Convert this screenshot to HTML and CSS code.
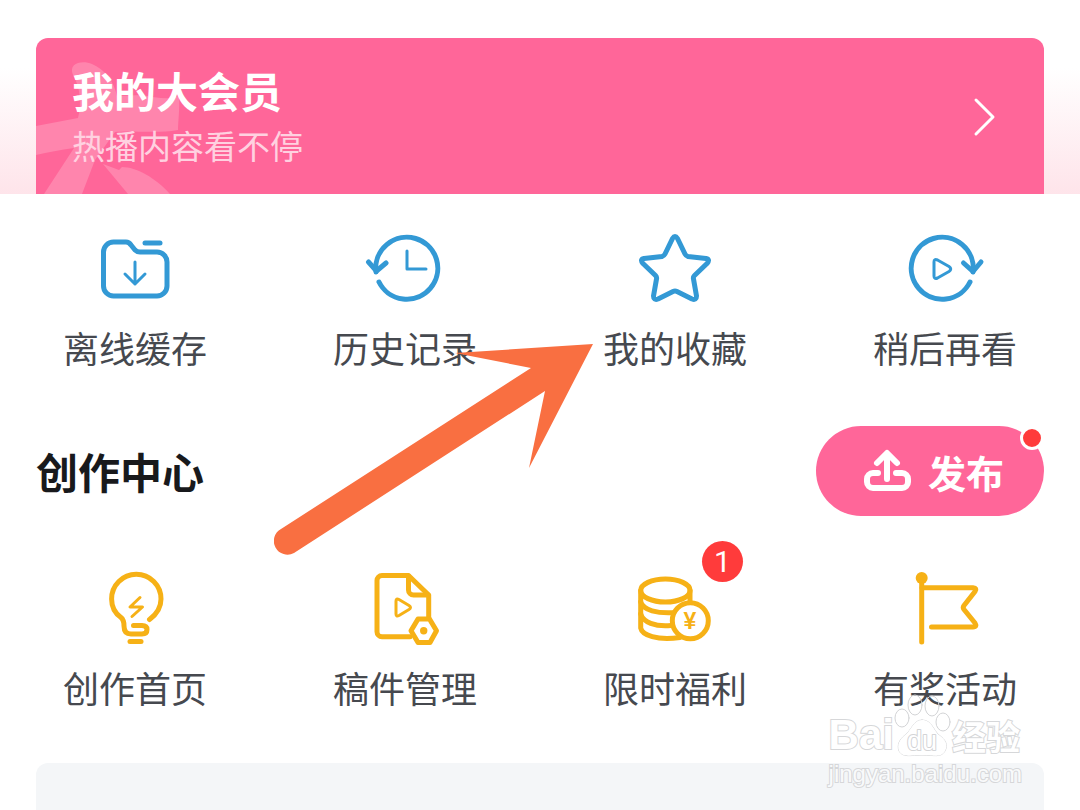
FILE: index.html
```html
<!DOCTYPE html>
<html lang="zh-CN">
<head>
    <meta charset="UTF-8">
    <meta name="viewport" content="width=device-width, initial-scale=1.0">
    <title>我的</title>
    <link rel="stylesheet" href="styles.css">
</head>
<body>
    <div class="page">
        <div class="vip">
            <a class="vip-card" href="#">
                <svg class="vip-bow" viewBox="0 0 180 156" aria-hidden="true">
                    <path d="M37 37C32 25 46 22 56 26C68 31 78 43 81 58L106 57C120 60 135 62 143 58C144 70 142 84 142 92C120 96 95 92 79 94L59 122L46 156H8L38 110C24 112 12 114 0 117V88L42 80C46 66 44 48 37 37Z"/>
                    <path d="M67 126L83 132L86 129C100 129 120 140 134 156H92Z"/>
                </svg>
                <span class="vip-text">
                    <strong class="vip-title">我的大会员</strong>
                    <span class="vip-sub">热播内容看不停</span>
                </span>
                <svg class="vip-more" viewBox="0 0 24 40" aria-hidden="true">
                    <path d="M4 3L21 20L4 37"/>
                </svg>
            </a>
        </div>

        <nav class="grid blue">
            <a class="item" href="#">
                <svg class="icon" viewBox="0 0 80 80" aria-hidden="true">
                    <path d="M8.5 24a10 10 0 0 1 10-10H31q3 0 5 3l4 5q2 2 5 2H62a10 10 0 0 1 10 10V58a10 10 0 0 1-10 10H18.5a10 10 0 0 1-10-10Z"/>
                    <path d="M50 15H65"/>
                    <path class="thin" d="M40 34V56M30 46L40 56L50 46"/>
                </svg>
                <span class="label">离线缓存</span>
            </a>
            <a class="item" href="#">
                <svg class="icon" viewBox="0 0 80 80" aria-hidden="true">
                    <path d="M11 44A31 31 0 1 1 14 54"/>
                    <path d="M3.5 34L11.5 43L21 35"/>
                    <path class="thin" d="M42 23V41H61"/>
                </svg>
                <span class="label">历史记录</span>
            </a>
            <a class="item" href="#">
                <svg class="icon" viewBox="0 0 80 80" aria-hidden="true">
                    <path d="M37.5 10.5Q40 6.500 42.5 10.5L50 26Q51 28 53 28.5L71 30.5Q75.5 31.5 72 35.5L59.5 47.5Q58 49 58.5 51L61.5 68Q61.5 72.5 57 71L42 63.5Q40 62.5 38 63.5L23 71Q18.5 72.5 18.5 68L21.5 51Q22 49 20.5 47.5L8 35.5Q4.5 31.5 9 30.5L27 28.5Q29 28 30 26Z"/>
                </svg>
                <span class="label">我的收藏</span>
            </a>
            <a class="item" href="#">
                <svg class="icon" viewBox="0 0 80 80" aria-hidden="true">
                    <path d="M68 44A31 31 0 1 0 65 54"/>
                    <path d="M58.5 35L68 43.5L76 34"/>
                    <path class="thin" d="M29 34Q29 30.5 32.5 32L44 38.5Q47.5 41 44 43.5L32.5 50Q29 51.5 29 48Z"/>
                </svg>
                <span class="label">稍后再看</span>
            </a>
        </nav>

        <div class="section-head">
            <h2>创作中心</h2>
            <button class="publish" type="button">
                <svg class="upload" viewBox="0 0 48 48" aria-hidden="true">
                    <path d="M24 32V7M14 16L24 6L34 16"/>
                    <path d="M15 26H10a6 6 0 0 0-6 6v3a6 6 0 0 0 6 6h29a6 6 0 0 0 6-6v-3a6 6 0 0 0-6-6h-6"/>
                </svg>
                发布
                <span class="dot"></span>
            </button>
        </div>

        <nav class="grid yellow">
            <a class="item" href="#">
                <svg class="icon" viewBox="0 0 80 80" aria-hidden="true">
                    <path d="M54.5 51.5C62 46 66 39 66 31A24.7 24.7 0 0 0 16.6 31C16.6 40 21 46 26 49.5Q29 52 29 58Q29 66 36 66H47Q52 66 52 61.5Q52 57.5 47 57.5H38.5"/>
                    <path d="M35 73.5H46"/>
                    <path class="thin" d="M45 29.5L35 39H47.5L37 48.5"/>
                </svg>
                <span class="label">创作首页</span>
            </a>
            <a class="item" href="#">
                <svg class="icon" viewBox="0 0 80 80" aria-hidden="true">
                    <path d="M45 68.7H17a5 5 0 0 1-5-5V12.5a5 5 0 0 1 5-5H43.5L63.7 27V50"/>
                    <path d="M43.5 8V22a5 5 0 0 0 5 5H63"/>
                    <path class="thin" d="M31 33Q31 30 34 31.5L44 37.5Q47 39.5 44 41.5L34 47.5Q31 49 31 46Z"/>
                    <path d="M53 51H64.5L71.5 62.8L65 74.5H53L46 62.8Z"/>
                    <circle class="solid" cx="58.7" cy="62.7" r="3.7"/>
                </svg>
                <span class="label">稿件管理</span>
            </a>
            <a class="item" href="#">
                <span class="badge">1</span>
                <svg class="icon" viewBox="0 0 80 80" aria-hidden="true">
                    <ellipse cx="30.4" cy="22.5" rx="24.7" ry="11.5"/>
                    <path d="M5.7 22.5V60C7 67 22 73 45 69.5M55 22.5V34"/>
                    <path d="M5.7 34C8 42 22 46 41 44.5M5.7 46C8 54 20 59 36 57.5"/>
                    <circle cx="55.3" cy="52.7" r="18"/>
                    <text class="yen" x="55" y="61" text-anchor="middle">¥</text>
                </svg>
                <span class="label">限时福利</span>
            </a>
            <a class="item" href="#">
                <svg class="icon" viewBox="0 0 80 80" aria-hidden="true">
                    <path d="M16.7 10V74"/>
                    <path d="M17 19.7H68Q72.5 20 70 23.5L59 37.5Q57.5 39.5 59 41.5L70 55Q72.5 59 68 59H26.5"/>
                    <circle class="solid" cx="16.7" cy="10" r="6"/>
                </svg>
                <span class="label">有奖活动</span>
            </a>
        </nav>

        <div class="panel"></div>

        <svg class="pointer" viewBox="0 0 320 211" aria-hidden="true">
            <path d="M319 0L181 9L257 24L7 185A13 13 0 0 0 20 209L271 47L255 124Z"/>
        </svg>

        <div class="watermark">
            <div class="mark-row">
                <span class="mark-bai">Bai</span>
                <svg class="paw" viewBox="0 0 58 64" aria-hidden="true">
                    <ellipse cx="8" cy="24" rx="7" ry="9"/>
                    <ellipse cx="21" cy="11" rx="7" ry="10"/>
                    <ellipse cx="38" cy="12" rx="7" ry="10"/>
                    <ellipse cx="49" cy="28" rx="7" ry="9"/>
                    <path d="M28 26C38 26 39 36 45 41C52 46 54 51 51 57C47 64 40 61 28 61C17 61 9 64 5 57C3 51 5 46 11 41C18 36 19 26 28 26Z"/>
                    <text x="28" y="56" text-anchor="middle">du</text>
                </svg>
                <span class="mark-cn">经验</span>
            </div>
            <div class="mark-url">jingyan.baidu.com</div>
        </div>
    </div>
</body>
</html>
```
FILE: styles.css
```css
body {
    margin: 0;
    background-color: #fff;
    font-family: "Noto Sans CJK SC", "Noto Sans", sans-serif;
    color: #46494f;
}
a {
    color: inherit;
    text-decoration: none;
}
.page {
    position: relative;
    min-height: 100vh;
    display: flex;
    flex-direction: column;
    overflow: hidden;
}
svg {
    fill: none;
    stroke: currentColor;
    stroke-linecap: round;
    stroke-linejoin: round;
}

/* member card */
.vip {
    padding: 38px 36px 0;
    background: linear-gradient(#fff 35%, #fee4ea);
}
.vip-card {
    position: relative;
    display: flex;
    align-items: center;
    justify-content: space-between;
    padding: 26px 48px 24px 36px;
    border-radius: 12px 12px 0 0;
    background-color: #ff6699;
    color: #fff;
    overflow: hidden;
}
.vip-bow {
    position: absolute;
    left: 0;
    top: 0;
    width: 180px;
    height: 156px;
    fill: #ff85ad;
    stroke: none;
}
.vip-text {
    position: relative;
    display: flex;
    flex-direction: column;
    gap: 4px;
}
.vip-title {
    font-size: 42px;
    line-height: 52px;
}
.vip-sub {
    font-size: 33px;
    line-height: 50px;
    color: #ffd1e0;
}
.vip-more {
    width: 24px;
    height: 40px;
    stroke-width: 3;
}

/* icon grids */
.grid {
    display: grid;
    grid-template-columns: repeat(4, 1fr);
}
.blue {
    padding-top: 34px;
}
.item {
    position: relative;
    display: flex;
    flex-direction: column;
    align-items: center;
    gap: 15px;
}
.icon {
    width: 80px;
    height: 80px;
    stroke-width: 5;
}
.blue .icon {
    color: #3399d5;
}
.yellow .icon {
    color: #f6b116;
}
.thin {
    stroke-width: 3;
}
.solid {
    fill: currentColor;
    stroke: none;
}
.yen {
    font-family: "Liberation Sans", sans-serif;
    font-size: 23px;
    font-weight: bold;
    fill: currentColor;
    stroke: none;
}
.icon circle:not(.solid) {
    fill: #fff;
}
.label {
    font-size: 36px;
    line-height: 48px;
}
.badge {
    position: absolute;
    top: -27px;
    left: calc(50% + 27px);
    width: 41px;
    height: 41px;
    border-radius: 50%;
    background-color: #ff3b3b;
    color: #fff;
    font-family: Roboto, sans-serif;
    font-size: 30px;
    line-height: 41px;
    text-align: center;
}

/* section title */
.section-head {
    display: flex;
    align-items: center;
    justify-content: space-between;
    padding: 55px 36px 52px;
}
h2 {
    margin: 0;
    font-size: 42px;
    line-height: 52px;
    color: #18191c;
}
.publish {
    position: relative;
    display: flex;
    align-items: center;
    gap: 17px;
    height: 90px;
    padding: 0 40px 0 47px;
    border: none;
    border-radius: 45px;
    background-color: #ff6699;
    color: #fff;
    font-family: inherit;
    font-size: 38px;
    font-weight: bold;
}
.upload {
    width: 48px;
    height: 48px;
    stroke-width: 6;
}
.dot {
    position: absolute;
    top: 0;
    right: 0;
    width: 18px;
    height: 18px;
    border: 3px solid #fff;
    border-radius: 50%;
    background-color: #ff3b3b;
}

.panel {
    flex: 1;
    margin: 52px 36px 0;
    border-radius: 12px 12px 0 0;
    background-color: #f4f6f8;
}

/* arrow over the grid */
.pointer {
    position: absolute;
    left: 274px;
    top: 344px;
    width: 320px;
    height: 211px;
    fill: #f96f41;
    stroke: none;
    pointer-events: none;
}

/* watermark */
.watermark {
    position: absolute;
    right: 58px;
    bottom: 20px;
    color: #fff;
    font-family: "Liberation Sans", "Noto Sans CJK SC", sans-serif;
    -webkit-text-stroke: 2px #d6d7d9;
    paint-order: stroke fill;
    pointer-events: none;
}
.mark-row {
    display: flex;
    align-items: flex-end;
}
.mark-bai {
    font-size: 42px;
    line-height: 46px;
    font-weight: bold;
}
.paw {
    width: 58px;
    height: 64px;
    stroke: #d3d4d6;
}
.paw path {
    fill: #fff;
}
.paw text {
    font-size: 27px;
    fill: #fff;
    stroke-width: 2;
    -webkit-text-stroke: 0;
}
.mark-cn {
    font-size: 34px;
    line-height: 40px;
    font-weight: bold;
}
.mark-url {
    font-size: 24px;
    line-height: 32px;
    color: #f9fafb;
}
```
